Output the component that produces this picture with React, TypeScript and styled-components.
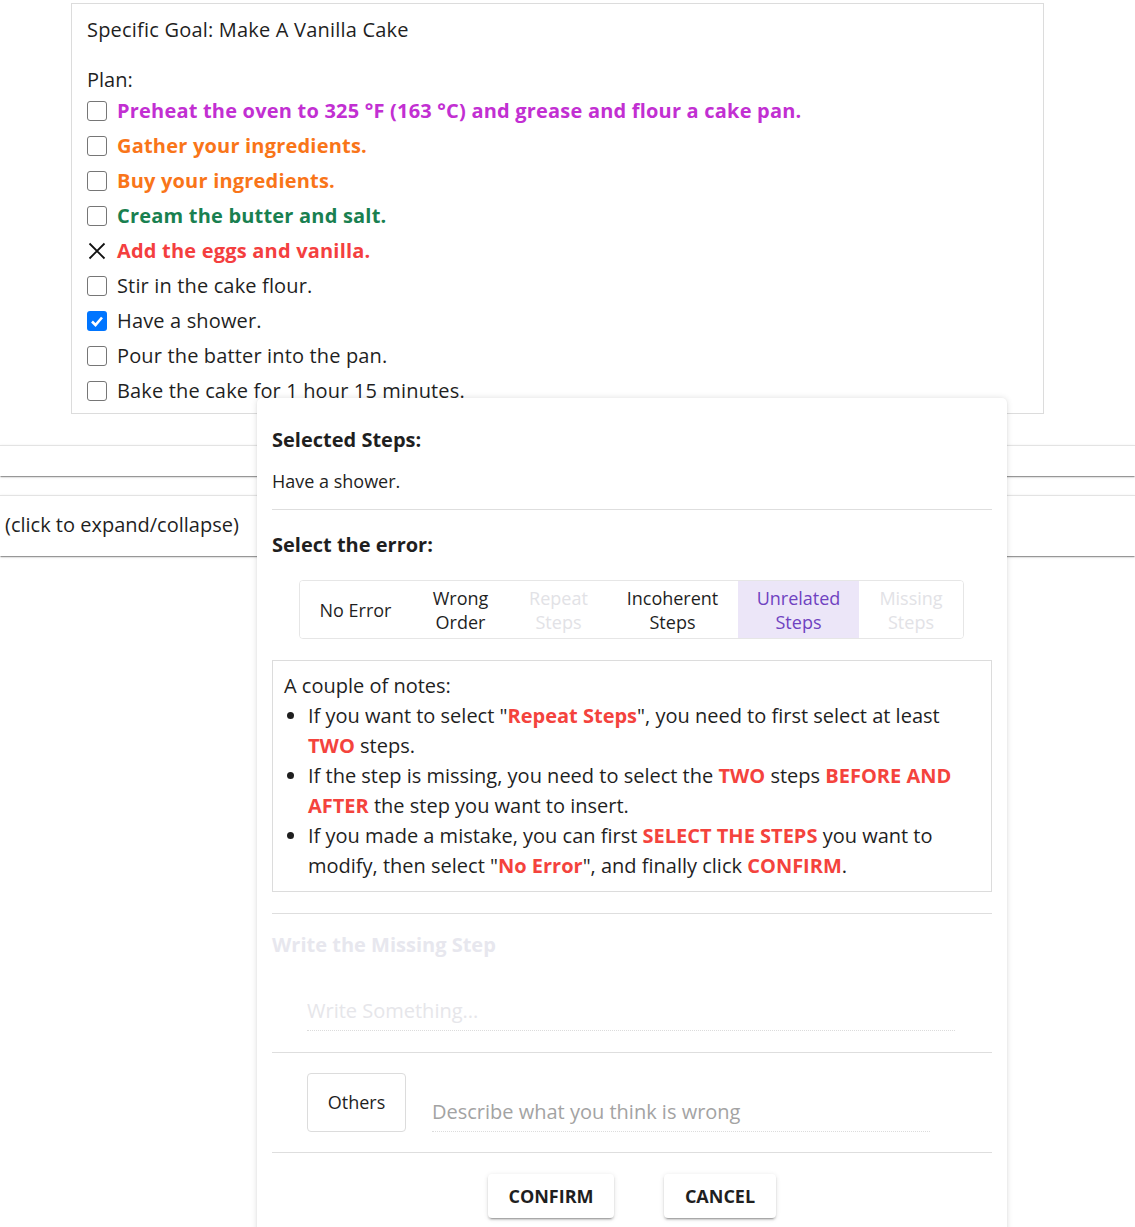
import React from "react";
import styled, { createGlobalStyle } from "styled-components";

const FONT = `"Open Sans", "Noto Sans", "Liberation Sans", sans-serif`;

const Global = createGlobalStyle`
  html, body { margin: 0; padding: 0; overflow: hidden; background: #fff; }
  body { font-family: ${FONT}; color: #1f1f1f; }
  * { box-sizing: border-box; }
`;

const Page = styled.div`
  position: relative;
  width: 1135px;
  height: 1227px;
  overflow: hidden;
  padding-top: 3px;
`;

const PlanCard = styled.div`
  margin-left: 71px;
  width: 973px;
  border: 1px solid #dcdcdc;
  padding: 12px 16px 5px 15px;
`;

const Goal = styled.div`
  font-size: 20px;
  line-height: 28px;
  letter-spacing: 0.2px;
`;

const PlanLabel = styled.div`
  font-size: 20px;
  line-height: 26px;
  margin-top: 23px;
`;

const StepRow = styled.div`
  display: flex;
  align-items: center;
  height: 35px;
  gap: 10px;
`;

const Box = styled.span<{ $checked?: boolean }>`
  width: 20px;
  height: 20px;
  flex: none;
  border-radius: 3px;
  border: ${(p) => (p.$checked ? "none" : "1.5px solid #767676")};
  background: ${(p) => (p.$checked ? "#0075ff" : "#fff")};
  display: inline-flex;
  align-items: center;
  justify-content: center;
`;

const Cross = styled.span`
  width: 20px;
  height: 20px;
  flex: none;
  display: inline-flex;
  align-items: center;
  justify-content: center;
`;

const StepText = styled.span<{ $color?: string }>`
  font-size: 20px;
  line-height: 28px;
  font-weight: ${(p) => (p.$color ? 700 : 400)};
  letter-spacing: ${(p) => (p.$color ? "0.2px" : "0.15px")};
  color: ${(p) => p.$color || "#1f1f1f"};
`;

const Bar = styled.div<{ $h: number; $mt: number }>`
  width: 100%;
  height: ${(p) => p.$h}px;
  margin-top: ${(p) => p.$mt}px;
  border-top: 1px solid #e3e3e3;
  background: #fff;
  box-shadow: 0 2px 1px -1px rgba(0, 0, 0, 0.25), 0 1px 1px 0 rgba(0, 0, 0, 0.14),
    0 1px 3px 0 rgba(0, 0, 0, 0.12);
  display: flex;
  align-items: center;
  padding: 0 0 4px 5px;
  font-size: 20px;
`;

const Popup = styled.div`
  position: absolute;
  left: 257px;
  top: 398px;
  width: 750px;
  height: 900px;
  background: #fff;
  border-radius: 5px;
  box-shadow: 0 0 6px rgba(0, 0, 0, 0.12), 0 1px 2px rgba(0, 0, 0, 0.08);
  padding: 0 15px;
`;

const Heading = styled.div<{ $mt: number; $faded?: boolean }>`
  margin-top: ${(p) => p.$mt}px;
  font-size: 20px;
  line-height: 28px;
  font-weight: 700;
  color: ${(p) => (p.$faded ? "#e7e7ee" : "#1f1f1f")};
`;

const Selected = styled.div`
  margin-top: 14px;
  font-size: 18px;
  line-height: 26px;
`;

const Divider = styled.div<{ $mt: number }>`
  margin-top: ${(p) => p.$mt}px;
  height: 1px;
  background: #dedede;
`;

const Segments = styled.div`
  margin: 21px 0 0 27px;
  width: 665px;
  height: 59px;
  display: flex;
  border: 1px solid #e6e6e6;
  border-radius: 4px;
  overflow: hidden;
`;

const Segment = styled.div<{ $w: number; $state: "normal" | "disabled" | "active" }>`
  width: ${(p) => p.$w}px;
  flex: none;
  display: flex;
  align-items: center;
  justify-content: center;
  text-align: center;
  font-size: 18px;
  line-height: 24px;
  background: ${(p) => (p.$state === "active" ? "#ece6f8" : "#fff")};
  color: ${(p) =>
    p.$state === "active" ? "#6f42c1" : p.$state === "disabled" ? "#e2e2e6" : "#1f1f1f"};
`;

const Notes = styled.div`
  margin-top: 21px;
  border: 1px solid #dcdcdc;
  padding: 10px 11px 10px 11px;
  font-size: 20px;
  line-height: 30px;
`;

const NoteList = styled.ul`
  margin: 0;
  padding-left: 24px;
`;

const Red = styled.span`
  color: #f4433d;
  font-weight: 700;
`;

const Field = styled.input<{ $w: number }>`
  width: ${(p) => p.$w}px;
  height: 36px;
  border: none;
  border-bottom: 1px dotted #dcdcdc;
  outline: none;
  background: transparent;
  font-family: ${FONT};
  font-size: 20px;
  padding: 0 0 4px 0;
  &::placeholder {
    color: ${(p) => (p.disabled ? "#e6e6ea" : "#a3a3a3")};
  }
`;

const FieldWrap = styled.div`
  margin: 36px 0 0 35px;
`;

const OthersRow = styled.div`
  margin: 20px 0 0 35px;
  display: flex;
  align-items: flex-end;
  gap: 26px;
`;

const OthersButton = styled.div`
  width: 99px;
  height: 59px;
  border: 1px solid #dcdcdc;
  border-radius: 4px;
  display: flex;
  align-items: center;
  justify-content: center;
  font-size: 18px;
  padding-bottom: 2px;
`;

const Actions = styled.div`
  margin-top: 21px;
  display: flex;
  justify-content: center;
  gap: 50px;
`;

const ActionButton = styled.div<{ $w: number }>`
  width: ${(p) => p.$w}px;
  height: 44px;
  border-radius: 4px;
  background: #fff;
  display: flex;
  align-items: center;
  justify-content: center;
  font-size: 18px;
  font-weight: 700;
  color: #1f1f1f;
  box-shadow: 0 3px 1px -2px rgba(0, 0, 0, 0.2), 0 2px 2px 0 rgba(0, 0, 0, 0.14),
    0 1px 5px 0 rgba(0, 0, 0, 0.12);
`;

type Step = { text: string; color?: string; mark?: "check" | "cross" };

const steps: Step[] = [
  { text: "Preheat the oven to 325 °F (163 °C) and grease and flour a cake pan.", color: "#c22fd2" },
  { text: "Gather your ingredients.", color: "#f97519" },
  { text: "Buy your ingredients.", color: "#f97519" },
  { text: "Cream the butter and salt.", color: "#198050" },
  { text: "Add the eggs and vanilla.", color: "#f43f3f", mark: "cross" },
  { text: "Stir in the cake flour." },
  { text: "Have a shower.", mark: "check" },
  { text: "Pour the batter into the pan." },
  { text: "Bake the cake for 1 hour 15 minutes." },
];

const segments: { label: React.ReactNode; w: number; state: "normal" | "disabled" | "active" }[] = [
  { label: "No Error", w: 111, state: "normal" },
  { label: <>Wrong<br />Order</>, w: 99, state: "normal" },
  { label: <>Repeat<br />Steps</>, w: 97, state: "disabled" },
  { label: <>Incoherent<br />Steps</>, w: 131, state: "normal" },
  { label: <>Unrelated<br />Steps</>, w: 121, state: "active" },
  { label: <>Missing<br />Steps</>, w: 104, state: "disabled" },
];

function Mark({ mark }: { mark?: Step["mark"] }) {
  if (mark === "cross")
    return (
      <Cross>
        <svg width="20" height="20" viewBox="0 0 20 20">
          <path d="M2.5 2.5 L17.5 17.5 M17.5 2.5 L2.5 17.5" stroke="#111" strokeWidth="1.8" />
        </svg>
      </Cross>
    );
  if (mark === "check")
    return (
      <Box $checked>
        <svg width="14" height="14" viewBox="0 0 14 14">
          <path d="M2 7.5 L5.5 11 L12 3.5" stroke="#fff" strokeWidth="2.6" fill="none" />
        </svg>
      </Box>
    );
  return <Box />;
}

export default function App() {
  return (
    <>
      <Global />
      <Page>
        <PlanCard>
          <Goal>Specific Goal: Make A Vanilla Cake</Goal>
          <PlanLabel>Plan:</PlanLabel>
          {steps.map((s) => (
            <StepRow key={s.text}>
              <Mark mark={s.mark} />
              <StepText $color={s.color}>{s.text}</StepText>
            </StepRow>
          ))}
        </PlanCard>
        <Bar $h={31} $mt={31} />
        <Bar $h={61} $mt={19}>(click to expand/collapse)</Bar>

        <Popup>
          <Heading $mt={28}>Selected Steps:</Heading>
          <Selected>Have a shower.</Selected>
          <Divider $mt={15} />
          <Heading $mt={21}>Select the error:</Heading>
          <Segments>
            {segments.map((s, i) => (
              <Segment key={i} $w={s.w} $state={s.state}>
                <span>{s.label}</span>
              </Segment>
            ))}
          </Segments>
          <Notes>
            <div>A couple of notes:</div>
            <NoteList>
              <li>
                If you want to select "<Red>Repeat Steps</Red>", you need to first select at least{" "}
                <Red>TWO</Red> steps.
              </li>
              <li>
                If the step is missing, you need to select the <Red>TWO</Red> steps{" "}
                <Red>BEFORE AND AFTER</Red> the step you want to insert.
              </li>
              <li>
                If you made a mistake, you can first <Red>SELECT THE STEPS</Red> you want to modify,
                then select "<Red>No Error</Red>", and finally click <Red>CONFIRM</Red>.
              </li>
            </NoteList>
          </Notes>
          <Divider $mt={21} />
          <Heading $mt={17} $faded>
            Write the Missing Step
          </Heading>
          <FieldWrap>
            <Field $w={648} placeholder="Write Something..." disabled />
          </FieldWrap>
          <Divider $mt={21} />
          <OthersRow>
            <OthersButton>Others</OthersButton>
            <Field $w={498} placeholder="Describe what you think is wrong" />
          </OthersRow>
          <Divider $mt={20} />
          <Actions>
            <ActionButton $w={126}>CONFIRM</ActionButton>
            <ActionButton $w={112}>CANCEL</ActionButton>
          </Actions>
        </Popup>
      </Page>
    </>
  );
}
